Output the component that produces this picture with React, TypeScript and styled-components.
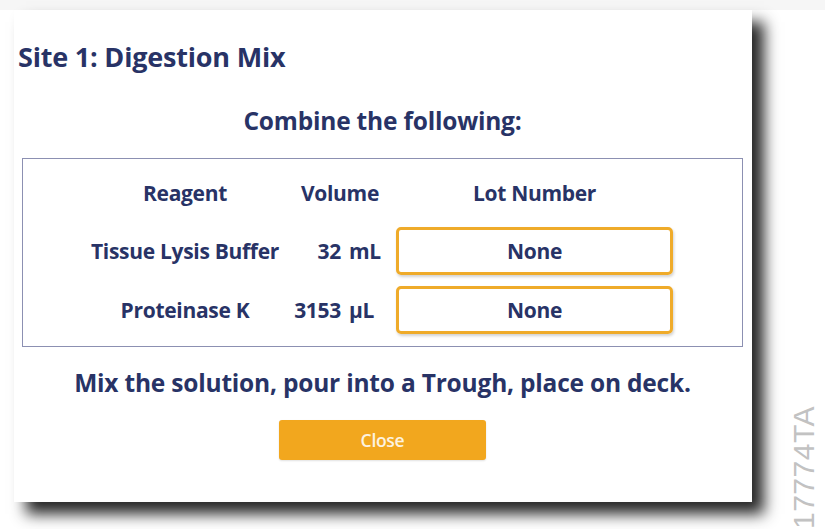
import React from "react";
import styled, { createGlobalStyle } from "styled-components";

const GlobalStyle = createGlobalStyle`
  html, body { margin: 0; padding: 0; background: #ffffff; }
  body { width: 825px; height: 529px; overflow: hidden; font-family: "Open Sans", Lato, sans-serif; }
  #root { width: 825px; height: 529px; position: relative; }
`;

const Page = styled.div`
  width: 825px;
  height: 529px;
  position: relative;
  box-sizing: border-box;
  padding: 10px 0 0 14px;
  background: linear-gradient(#f6f6f6, #f6f6f6) top / 100% 10px no-repeat, #ffffff;
`;

const Dialog = styled.div`
  width: 738px;
  height: 492px;
  box-sizing: border-box;
  background: #ffffff;
  box-shadow: 12px 12px 14px rgba(0, 0, 0, 0.85);
  display: flex;
  flex-direction: column;
  align-items: stretch;
  padding: 31px 9px 41px 8px;
  color: #283366;
`;

const Title = styled.h1`
  margin: 0 0 0 -4px;
  font-size: 27px;
  line-height: 32px;
  font-weight: 700;
  letter-spacing: -0.2px;
`;

const Heading = styled.h2<{ $size: number; $mt: number }>`
  margin: ${(p) => p.$mt}px 0 0 0;
  text-align: center;
  font-size: ${(p) => p.$size}px;
  line-height: 30px;
  font-weight: 700;
  letter-spacing: -0.2px;
`;

const TableBox = styled.div`
  margin-top: 22px;
  border: 1px solid #8c90b2;
  display: flex;
  flex-direction: column;
  gap: 11px;
  padding: 16px 0 12px 57px;
`;

const Row = styled.div<{ $header?: boolean }>`
  display: grid;
  grid-template-columns: 210px 106px 277px;
  align-items: center;
  height: ${(p) => (p.$header ? "36px" : "48px")};
  margin-bottom: ${(p) => (p.$header ? "5px" : "0")};
  font-size: 21px;
  font-weight: 700;
  letter-spacing: -0.3px;
`;

const Cell = styled.div<{ $shift?: number }>`
  text-align: center;
  white-space: nowrap;
  padding-right: ${(p) => p.$shift ?? 0}px;
`;

const Volume = styled.div`
  display: grid;
  grid-template-columns: 51px auto;
  column-gap: 8px;
  white-space: nowrap;
  span:first-child { text-align: right; }
`;

const LotField = styled.div`
  height: 48px;
  box-sizing: border-box;
  border: 3px solid #efab2a;
  border-radius: 5px;
  box-shadow: 1px 2px 3px rgba(0, 0, 0, 0.18);
  display: flex;
  align-items: center;
  justify-content: center;
`;

const CloseButton = styled.button`
  align-self: center;
  margin: 22px 0 0 0;
  width: 207px;
  height: 40px;
  border: none;
  border-radius: 3px;
  background: #f2a71e;
  color: #fdf3e0;
  font-family: "Open Sans", Lato, sans-serif;
  font-weight: 600;
  font-size: 17.5px;
  letter-spacing: -0.3px;
  box-shadow: 0 1px 2px rgba(0, 0, 0, 0.12);
`;

const Watermark = styled.div`
  position: absolute;
  left: 789px;
  bottom: 0;
  writing-mode: vertical-rl;
  transform: rotate(180deg);
  font-family: "Liberation Sans", Arial, sans-serif;
  font-size: 30px;
  line-height: 30px;
  color: #c2c2c2;
  letter-spacing: 0.5px;
`;

const rows = [
  { name: "Tissue Lysis Buffer", amount: "32", unit: "mL", lot: "None" },
  { name: "Proteinase K", amount: "3153", unit: "µL", lot: "None" },
];

export default function App() {
  return (
    <>
      <GlobalStyle />
      <Page>
        <Dialog>
          <Title>Site 1: Digestion Mix</Title>
          <Heading $size={24.5} $mt={33}>Combine the following:</Heading>
          <TableBox>
            <Row $header>
              <Cell>Reagent</Cell>
              <Cell $shift={6}>Volume</Cell>
              <Cell>Lot Number</Cell>
            </Row>
            {rows.map((r) => (
              <Row key={r.name}>
                <Cell>{r.name}</Cell>
                <Volume>
                  <span>{r.amount}</span>
                  <span>{r.unit}</span>
                </Volume>
                <LotField>{r.lot}</LotField>
              </Row>
            ))}
          </TableBox>
          <Heading $size={24.5} $mt={21}>Mix the solution, pour into a Trough, place on deck.</Heading>
          <CloseButton>Close</CloseButton>
        </Dialog>
        <Watermark>17774TA</Watermark>
      </Page>
    </>
  );
}
